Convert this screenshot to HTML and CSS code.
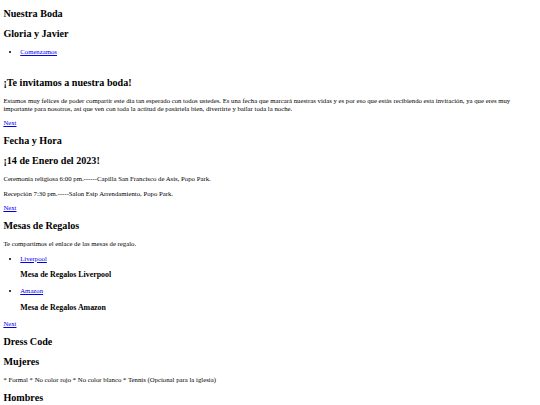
FILE: index.html
```html
<!DOCTYPE html>
<html lang="es">
<head>
<meta charset="utf-8">
<title>Nuestra Boda</title>
<link rel="stylesheet" href="styles.css">
</head>
<body class="page">
<header class="header">
  <h2 class="title title-first">Nuestra Boda</h2>
  <h2 class="title">Gloria y Javier</h2>
  <ul class="list">
    <li><a class="link" href="#invitacion">Comenzamos</a></li>
  </ul>
</header>
<section class="section section-first" id="invitacion">
  <h2 class="title">¡Te invitamos a nuestra boda!</h2>
  <p class="text">Estamos muy felices de poder compartir este día tan esperado con todos ustedes. Es una fecha que marcará nuestras vidas y es por eso que estás recibiendo esta invitación, ya que eres muy importante para nosotros, así que ven con toda la actitud de pasártela bien, divertirte y bailar toda la noche.</p>
  <a class="link" href="#fecha">Next</a>
</section>
<section class="section" id="fecha">
  <h2 class="title">Fecha y Hora</h2>
  <h2 class="title">¡14 de Enero del 2023!</h2>
  <p class="text">Ceremonia religiosa 6:00 pm.------Capilla San Francisco de Asís, Popo Park.</p>
  <p class="text">Recepción 7:30 pm.-----Salon Esip Arrendamiento, Popo Park.</p>
  <a class="link" href="#regalos">Next</a>
</section>
<section class="section" id="regalos">
  <h2 class="title">Mesas de Regalos</h2>
  <p class="text">Te compartimos el enlace de las mesas de regalo.</p>
  <ul class="list">
    <li><a class="link" href="#liverpool">Liverpool</a>
      <h3 class="subtitle">Mesa de Regalos Liverpool</h3>
    </li>
    <li><a class="link" href="#amazon">Amazon</a>
      <h3 class="subtitle">Mesa de Regalos Amazon</h3>
    </li>
  </ul>
  <a class="link" href="#dress">Next</a>
</section>
<section class="section" id="dress">
  <h2 class="title">Dress Code</h2>
  <h2 class="title">Mujeres</h2>
  <p class="text">* Formal * No color rojo * No color blanco * Tennis (Opcional para la iglesia)</p>
  <h2 class="title">Hombres</h2>
  <p class="text">* Formal * No color blanco</p>
</section>
</body>
</html>
```
FILE: styles.css
```css
.page {
  margin: 3.375px;
  font-family: "Liberation Serif", "Times New Roman", serif;
  font-size: 6.75px;
  line-height: 7.7px;
  color: #000;
  background: #fff;
}
.title {
  font-size: 10.125px;
  line-height: 11.6px;
  font-weight: bold;
  margin: 8.4px 0;
}
.title-first {
  margin-top: 4.9px;
}
.subtitle {
  font-size: 7.9px;
  line-height: 9.1px;
  font-weight: bold;
  margin: 7.9px 0;
}
.text {
  margin: 6.75px 0;
}
.list {
  margin: 6.75px 0;
  padding-left: 16.875px;
  list-style: disc;
}
.link {
  color: #0000ee;
  text-decoration: underline;
}
.section-first {
  padding-top: 6px;
}
```
